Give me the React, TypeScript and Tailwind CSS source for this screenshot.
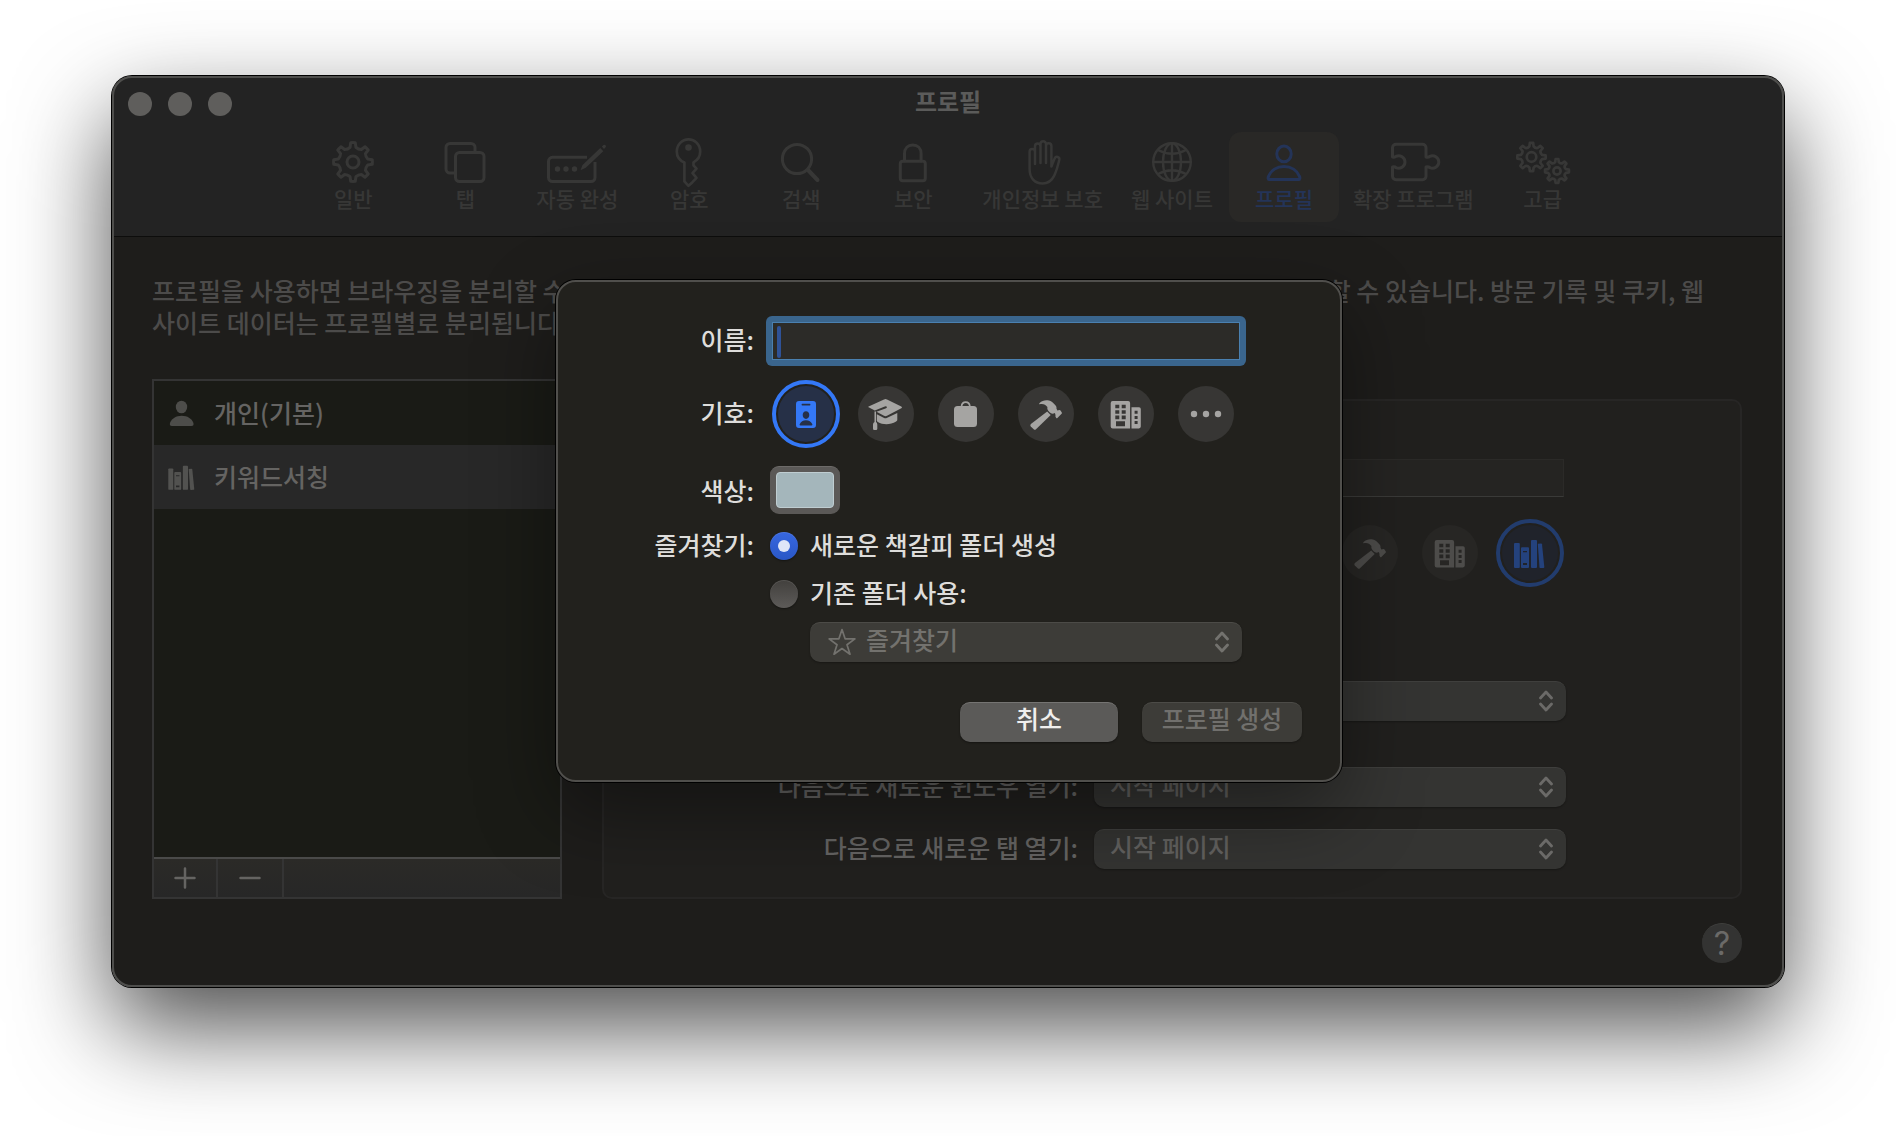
import type { ReactNode } from "react";
import { clsx } from "clsx";

// outline of a cog with rounded joins, first tooth pointing up
function gearPath(cx: number, cy: number, outer: number, root: number, teeth = 8) {
  const step = (Math.PI * 2) / teeth;
  const at = (r: number, a: number) =>
    `${(cx + r * Math.sin(a)).toFixed(2)} ${(cy - r * Math.cos(a)).toFixed(2)}`;
  let d = "";
  for (let i = 0; i < teeth; i++) {
    const a = i * step;
    d += `${i === 0 ? "M" : "L"}${at(root, a - step * 0.25)}`;
    d += `L${at(outer, a - step * 0.15)}`;
    d += `A${outer} ${outer} 0 0 1 ${at(outer, a + step * 0.15)}`;
    d += `L${at(root, a + step * 0.25)}`;
    d += `Q${at(root - 1.4, a + step * 0.5)} ${at(root, a + step * 0.75)}`;
  }
  return d + "Z";
}

function ToolIcon({ children }: { children: ReactNode }) {
  return (
    <svg
      viewBox="0 0 60 48"
      className="h-12 w-[60px] overflow-visible"
      fill="none"
      stroke="currentColor"
      strokeWidth="3"
      strokeLinecap="round"
      strokeLinejoin="round"
      aria-hidden="true"
    >
      {children}
    </svg>
  );
}

const tools: { label: string; icon: ReactNode; active?: boolean }[] = [
  {
    label: "일반",
    icon: (
      <>
        <path d={gearPath(30, 24, 19.4, 15)} />
        <circle cx="30" cy="24" r="6" />
      </>
    ),
  },
  {
    label: "탭",
    icon: (
      <>
        <path d="M40 13V9.5a4 4 0 0 0-4-4H15a4 4 0 0 0-4 4V31a4 4 0 0 0 4 4h4" strokeLinecap="butt" />
        <rect x="20.5" y="14.5" width="28.5" height="29" rx="4" />
      </>
    ),
  },
  {
    label: "자동 완성",
    icon: (
      <>
        <path
          d="M40 19.3H5.5a4 4 0 0 0-4 4V39.5a4 4 0 0 0 4 4H44a4 4 0 0 0 4-4V24"
          strokeLinecap="butt"
        />
        <path
          d="M33.5 32.2l2-5.2L53.3 10l3 3.2-17.5 16.6zM54.8 8.6l1.7-1.6q1-.7 2 .3t.1 2l-1.6 1.6z"
          fill="currentColor"
          stroke="none"
        />
        <g fill="currentColor" stroke="none">
          <circle cx="10.5" cy="31" r="2.7" />
          <circle cx="19" cy="31" r="2.7" />
          <circle cx="27.5" cy="31" r="2.7" />
        </g>
      </>
    ),
  },
  {
    label: "암호",
    icon: (
      <>
        <path
          d="M25.4 24.6C20.6 22.6 17.8 18.8 17.8 13.6 17.8 6.6 23 1.3 29.5 1.3S41.2 6.6 41.2 13.6c0 5-2.6 8.600-6.700 10.800v3l3 3.200-4 4.600 4 4.600-4 4.400-4 3.600-4.100-4.400z"
          strokeWidth="2.7"
        />
        <circle cx="29.5" cy="9.5" r="3.3" fill="currentColor" stroke="none" />
      </>
    ),
  },
  {
    label: "검색",
    icon: (
      <>
        <circle cx="26" cy="21" r="14.6" />
        <path d="M37 32l9.5 10" strokeWidth="4" />
      </>
    ),
  },
  {
    label: "보안",
    icon: (
      <>
        <rect x="17.3" y="23.3" width="25" height="19.5" rx="2.5" />
        <path d="M21.5 23v-7.2c0-5.400 3.500-8.800 8.300-8.800s8.300 3.400 8.300 8.800V23" />
      </>
    ),
  },
  {
    label: "개인정보 보호",
    icon: (
      <path
        d="M22 26V13.800a2.700 2.700 0 0 0-5.400 0V31c0 9 5 14.500 13 14.500 5.500 0 9-2.600 11.500-7.600 2.300-4.700 4-11 5.200-16.200.5-2.700-3.200-4.100-4.600-1.300l-3.300 8.100V8a2.700 2.700 0 0 0-5.400 0v17V6a2.700 2.700 0 0 0-5.500 0v19V8.200a2.700 2.700 0 0 0-5.500 0V24"
        strokeWidth="2.5"
      />
    ),
  },
  {
    label: "웹 사이트",
    icon: (
      <g strokeWidth="2.4">
        <circle cx="30" cy="24" r="18.8" />
        <ellipse cx="30" cy="24" rx="9" ry="18.8" />
        <path d="M30 5.200v37.600M11.200 24h37.600M16 12q14 7.500 28 0M16 36q14-7.500 28 0" />
      </g>
    ),
  },
  {
    label: "프로필",
    active: true,
    icon: (
      <>
        <ellipse cx="30" cy="15.9" rx="7.2" ry="7.8" />
        <path d="M15.500 41.600c-1.500 0-1.600-1.700-1-3.200 2.400-5.800 8.200-9.800 15.500-9.800s13.100 4 15.500 9.800c.6 1.500.5 3.200-1 3.200z" />
      </>
    ),
  },
  {
    label: "확장 프로그램",
    icon: (
      <path d="M9.500 19V9.800a3.500 3.500 0 0 1 3.500-3.500h26.500a3.500 3.500 0 0 1 3.500 3.500V19q2.500.5 3.800-.7a6.300 6.300 0 1 1 0 11.400Q45.500 28.500 43 29v9.200a3.500 3.500 0 0 1-3.500 3.500H13a3.500 3.500 0 0 1-3.500-3.500V29q2.500-.5 3.500.7a6.300 6.300 0 1 0 0-11.400Q12 19.500 9.500 19z" />
    ),
  },
  {
    label: "고급",
    icon: (
      <g strokeWidth="2.7">
        <path d={gearPath(18.5, 19, 14.2, 10.8)} />
        <circle cx="18.5" cy="19" r="4.8" />
        <path d={gearPath(44, 33, 12, 9.2)} />
        <circle cx="44" cy="33" r="3.6" />
      </g>
    ),
  },
];

type SymbolName = "badge" | "cap" | "bag" | "hammer" | "building" | "more" | "books";

function SymbolIcon({ name, className }: { name: SymbolName; className?: string }) {
  return (
    <svg viewBox="0 0 56 56" className={className} fill="currentColor" aria-hidden="true">
      {name === "badge" && (
        <path
          fillRule="evenodd"
          d="M21 15h14a3 3 0 0 1 3 3v21a3 3 0 0 1-3 3H21a3 3 0 0 1-3-3V18a3 3 0 0 1 3-3zM24.200 17.800a.9.9 0 0 0 0 1.700h7.600a.9.9 0 0 0 0-1.700zM28 25.300c-1.900 0-3.300 1.600-3.300 3.700s1.400 3.900 3.300 3.900 3.300-1.800 3.300-3.900-1.400-3.700-3.300-3.700zM22.400 39.600h11.200c.9 0 .9-.8.600-1.500-1-2.400-3.300-3.800-6.200-3.800s-5.200 1.400-6.200 3.800c-.3.7-.3 1.500.6 1.500z"
        />
      )}
      {name === "cap" && (
        <>
          <path d="M18.800 28.300l7.300 3.700q1.300.6 2.600 0l10.600-5v6.600c0 1-.4 1.400-1.200 2-5.800 3.400-13.200 3.400-18.300.4-.7-.5-1-.9-1-1.700z" />
          <path d="M10.600 20.500L26 13.400q1.500-.7 3 0l14.300 7q1.500.9 0 1.800L29 29.800q-1.500.8-3 0l-7.500-4 9.600-3.600q1.300-.7.700-1.500t-2-.2l-10 4-6.200-3.200q-1-.4 0-.8z" />
          <path d="M16.500 25.500h1.500V36q1.300.8 1.300 2.500v4.200q0 1.300-1.300 1.300H16.300Q15 44 15 42.700v-4.200q0-1.700 1.500-2.500z" />
        </>
      )}
      {name === "bag" && (
        <>
          <rect x="16" y="20" width="23" height="21" rx="3.5" />
          <path d="M23.500 20.500c.3-2.800 2-4.300 4.200-4.300s3.900 1.500 4.200 4.300" fill="none" stroke="currentColor" strokeWidth="1.7" />
        </>
      )}
      {name === "hammer" && (
        <>
          <path d="M21.600 18.300c-.7-.2-.5-.9 0-1.400 2.500-2.400 6-3.300 9.400-2.400 2.200.6 3.500 1.900 5.200 3.500 1.900 1.700 2.500 2.600 2.300 4.800l.9 1.700 2-.6q.7-.1 1.100.5l1.300 2.200q.4.700-.2 1.200l-4.200 4.200q-.6.400-1.200-.1-1.200-1-.7-2.800l-.6-2c-2.300 1-3.900.6-5.300-.8-1.800-1.700-2.600-3.200-2.200-5.200-2-2.300-4-3.700-7.800-2.800z" />
          <path d="M29.200 25.600l3.500 3.400L18 43.300q-1.200 1.100-2.300 0l-2.900-2.900q-1.100-1.200.1-2.300z" />
        </>
      )}
      {name === "building" && (
        <path
          fillRule="evenodd"
          d="M14.700 15h15.400a2 2 0 0 1 2 2v25.400H14.700a2 2 0 0 1-2-2V17a2 2 0 0 1 2-2zM17.300 18.700v3.600h4v-3.600zM23.700 18.700v3.600h4v-3.600zM17.300 24.200v3.600h4v-3.600zM23.700 24.200v3.600h4v-3.600zM17.300 29.600v3.600h4v-3.600zM23.700 29.600v3.600h4v-3.600zM18 35.300v5h9v-5zM34 21.200h7a1.800 1.800 0 0 1 1.800 1.800v17.600a1.800 1.800 0 0 1-1.800 1.800H33.500V21.200zM36.600 24.800v3h3v-3zM36.600 29.900v3h3v-3zM36.600 35v3h3v-3z"
        />
      )}
      {name === "more" && (
        <>
          <circle cx="16" cy="28" r="3.2" />
          <circle cx="28" cy="28" r="3.2" />
          <circle cx="40" cy="28" r="3.2" />
        </>
      )}
      {name === "books" && (
        <>
          <rect x="12" y="18" width="5.8" height="25" rx="1" />
          <path
            fillRule="evenodd"
            d="M20 22.300h6a1 1 0 0 1 1 1V42a1 1 0 0 1-1 1h-6a1 1 0 0 1-1-1V23.300a1 1 0 0 1 1-1zM21 26v1.200h4V26zM21 38v2h4v-2z"
          />
          <rect x="29" y="15" width="6" height="28" rx="1" />
          <path d="M35.800 18.800l3.300-.3q.8 0 .9.800l2.300 22.600q.1 1-.9 1.100l-3 .1q-.8 0-.9-.9z" />
        </>
      )}
    </svg>
  );
}

const symbolLabels: Record<SymbolName, string> = {
  badge: "신분증",
  cap: "학사모",
  bag: "가방",
  hammer: "망치",
  building: "건물",
  more: "더 보기",
  books: "책",
};

function SymbolPicker({ names, selected, dim }: { names: SymbolName[]; selected: SymbolName; dim?: boolean }) {
  return (
    <div role="group" aria-label="기호" className="flex gap-3 pl-0.5">
      {names.map((name) => {
        const on = name === selected;
        return (
          <button
            key={name}
            type="button"
            aria-label={symbolLabels[name]}
            aria-pressed={on}
            className={clsx(
              "size-[68px] rounded-full border-4 p-0.5",
              !on && "border-transparent",
              on && (dim ? "border-[#223c6d]" : "border-[#3478f6]"),
            )}
          >
            <span
              className={clsx(
                "block size-14 rounded-full",
                on && (dim ? "bg-[#20232b] text-[#24427d]" : "bg-[#263047] text-[#3478f6]"),
                !on && (dim ? "bg-[#272624] text-[#4d4c4a]" : "bg-[#373634] text-[#a5a4a2]"),
              )}
            >
              <SymbolIcon name={name} className="size-14" />
            </span>
          </button>
        );
      })}
    </div>
  );
}

function Chevrons({ className }: { className?: string }) {
  return (
    <svg
      viewBox="0 0 14 22"
      className={clsx("pointer-events-none absolute top-[9px] right-[13px] h-[22px] w-3.5", className)}
      fill="none"
      stroke="currentColor"
      strokeWidth="2.8"
      strokeLinecap="round"
      strokeLinejoin="round"
      aria-hidden="true"
    >
      <path d="M1.500 8L7 2l5.500 6M1.500 14L7 20l5.500-6" />
    </svg>
  );
}

function PanelSelect({ id, label, value, className }: { id: string; label?: string; value: string; className?: string }) {
  return (
    <div className={clsx("flex items-center justify-end gap-4", className)}>
      {label && (
        <label htmlFor={id} className="pb-1 text-right">
          {label}
        </label>
      )}
      <div className="relative w-[472px]">
        <select
          id={id}
          aria-label={label ? undefined : "즐겨찾기"}
          className="block h-10 w-full appearance-none rounded-[10px] border-t border-[#3f3f3d] bg-[#343432] px-4 pb-2 text-[#62615f] shadow-[0_1px_2px_rgba(0,0,0,.3)]"
        >
          <option>{value}</option>
        </select>
        <Chevrons className="text-[#6b6a68]" />
      </div>
    </div>
  );
}

function Toolbar() {
  return (
    <header className="relative border-b border-[#0d0d0c] bg-[#232323] pb-3.5">
      <div className="absolute top-4 left-4 flex gap-4">
        <button type="button" aria-label="닫기" className="size-6 rounded-full bg-[#5f5e5c]" />
        <button type="button" aria-label="최소화" className="size-6 rounded-full bg-[#5f5e5c]" />
        <button type="button" aria-label="확대" className="size-6 rounded-full bg-[#5f5e5c]" />
      </div>
      <h1 className="pt-[7px] text-center text-2xl leading-9 font-bold text-[#5b5b5a]">프로필</h1>
      <nav className="mt-[13px] flex justify-center gap-0.5">
        {tools.map((tool) => (
          <button
            key={tool.label}
            type="button"
            aria-current={tool.active ? "page" : undefined}
            className={clsx(
              "flex min-w-[110px] flex-col items-center rounded-xl px-3 pt-1.5 pb-3 text-[21px] leading-6 font-medium",
              tool.active ? "bg-[#292826] text-[#243458]" : "text-[#373736]",
            )}
          >
            <ToolIcon>{tool.icon}</ToolIcon>
            {tool.label}
          </button>
        ))}
      </nav>
    </header>
  );
}

function ProfileList() {
  return (
    <div className="mt-[41px] flex w-[410px] shrink-0 flex-col border-2 border-[#343434] bg-[#1a1b16] text-[#656462]">
      <ul>
        <li className="flex h-16 items-center gap-2 pl-1">
          <svg viewBox="0 0 48 48" className="size-12 text-[#4d4d4a]" fill="currentColor" aria-hidden="true">
            <ellipse cx="23.5" cy="18" rx="5.7" ry="6.3" />
            <path d="M14 37c-1.800 0-2.700-1.300-1.900-3.300C13.800 29.600 18 26.800 23.700 26.800s9.900 2.800 11.600 6.900c.8 2-.1 3.300-1.900 3.300z" />
          </svg>
          <span className="pb-0.5">개인(기본)</span>
        </li>
        <li className="flex h-16 items-center gap-2 bg-[#282828] pl-1">
          <SymbolIcon name="books" className="size-12 text-[#525250]" />
          <span className="pb-0.5">키워드서칭</span>
        </li>
      </ul>
      <div className="mt-auto flex h-10 border-t-2 border-[#4a4a49] bg-linear-to-b from-[#2b2a27] to-[#272727]">
        <button type="button" aria-label="프로필 추가" className="flex w-16 items-center justify-center border-r-2 border-[#343434]">
          <svg viewBox="0 0 22 22" className="size-[22px]" stroke="currentColor" strokeWidth="2.5" strokeLinecap="round">
            <path d="M11 1.500v19M1.500 11h19" />
          </svg>
        </button>
        <button type="button" aria-label="프로필 제거" className="flex w-[66px] items-center justify-center border-r-2 border-[#343434]">
          <svg viewBox="0 0 22 22" className="size-[22px]" stroke="currentColor" strokeWidth="2.5" strokeLinecap="round">
            <path d="M1.500 11h19" />
          </svg>
        </button>
      </div>
    </div>
  );
}

function ProfileDetail() {
  return (
    <section className="mt-[61px] flex-1 rounded-[10px] border-2 border-[#272625] bg-[#21201e] pt-[58px] pr-[174px] pb-7 text-[#656463]">
      <div className="flex justify-end">
        <div className="w-[472px]">
          <input
            type="text"
            aria-label="이름"
            className="block h-[38px] w-[470px] border border-[#2b2a28] border-b-[#3a3a38] bg-[#252422] px-2"
          />
        </div>
      </div>
      <div className="mt-[22px] flex justify-end">
        <div className="w-[472px]">
          <SymbolPicker dim selected="books" names={["badge", "cap", "bag", "hammer", "building", "books"]} />
        </div>
      </div>
      <PanelSelect id="detail-favorites" value="" className="mt-[94px]" />
      <PanelSelect id="detail-window" label="다음으로 새로운 윈도우 열기:" value="시작 페이지" className="mt-[46px]" />
      <PanelSelect id="detail-tab" label="다음으로 새로운 탭 열기:" value="시작 페이지" className="mt-[22px]" />
    </section>
  );
}

const rowLabel = "w-[196px] shrink-0 text-right";
const radio =
  "size-7 appearance-none rounded-full bg-linear-to-b from-[#42403d] to-[#5d5b59] shadow-[inset_0_1px_0_rgba(255,255,255,.1),0_1px_2px_rgba(0,0,0,.4)] checked:from-[#3767e0] checked:to-[#2a57c6]";

function NewProfileDialog() {
  return (
    <div className="absolute inset-x-0 top-[204px] flex justify-center pl-0.5">
      <form
        role="dialog"
        aria-label="프로필 생성"
        className="w-[786px] rounded-[20px] border-2 border-[#504f4c] bg-[#22211d] pt-[34px] pb-[38px] text-[#dedddb] shadow-[0_0_0_1px_#000,0_30px_80px_rgba(0,0,0,.4)]"
      >
        <div className="flex items-center gap-3">
          <label htmlFor="new-name" className={clsx(rowLabel, "pb-1")}>
            이름:
          </label>
          <div className="relative rounded-md bg-[#3a658d] p-1.5">
            <input
              id="new-name"
              type="text"
              className="block h-[38px] w-[468px] border border-[#4a80b0] bg-[#2c2b28] px-2 outline-none"
            />
            <span className="absolute top-2.5 left-[11px] h-8 w-1 rounded-sm bg-[#2f5297]" />
          </div>
        </div>

        <div className="mt-3.5 flex items-center gap-4">
          <span className={clsx(rowLabel, "pb-1")}>기호:</span>
          <SymbolPicker selected="badge" names={["badge", "cap", "bag", "hammer", "building", "more"]} />
        </div>

        <div className="mt-[18px] flex items-center gap-4">
          <label htmlFor="new-color" className={rowLabel}>
            색상:
          </label>
          <input
            id="new-color"
            type="color"
            defaultValue="#a4b6bb"
            className="h-12 w-[70px] appearance-none rounded-[9px] border-t border-[#6d6b69] bg-[#5b5957] px-1.5 pt-[5px] pb-1.5 [&::-webkit-color-swatch]:rounded [&::-webkit-color-swatch]:border [&::-webkit-color-swatch]:border-[#bfcdd1] [&::-webkit-color-swatch-wrapper]:p-0"
          />
        </div>

        <fieldset className="mt-[18px] flex gap-4">
          <legend className="sr-only">즐겨찾기</legend>
          <span className={clsx(rowLabel, "leading-6")} aria-hidden="true">
            즐겨찾기:
          </span>
          <div>
            <label className="flex h-7 items-center gap-3">
              <span className="relative flex size-7">
                <input type="radio" name="folder" defaultChecked className={radio} />
                <span className="absolute top-2 left-2 size-3 rounded-full bg-[#dfe6f8]" />
              </span>
              <span className="pb-1">새로운 책갈피 폴더 생성</span>
            </label>
            <label className="mt-5 flex h-7 items-center gap-3">
              <input type="radio" name="folder" className={radio} />
              <span className="pb-1">기존 폴더 사용:</span>
            </label>
            <div className="relative mt-3.5 ml-10 text-[#73726e]">
              <select
                disabled
                aria-label="기존 폴더 사용"
                className="block h-10 w-[432px] appearance-none rounded-[10px] border-t border-[#4c4b47] bg-[#3d3c38] pb-2 pl-14 shadow-[0_1px_2px_rgba(0,0,0,.3)]"
              >
                <option>즐겨찾기</option>
              </select>
              <svg
                viewBox="0 0 28 28"
                className="pointer-events-none absolute top-1.5 left-[18px] size-7"
                fill="none"
                stroke="currentColor"
                strokeWidth="1.7"
                strokeLinejoin="round"
                aria-hidden="true"
              >
                <path d="M14 1.500l3.100 9.300 9.800.1-7.900 5.900 3 9.400-8-5.700-8 5.700 3-9.400L1.100 10.900l9.800-.1z" />
              </svg>
              <Chevrons />
            </div>
          </div>
        </fieldset>

        <div className="mt-10 flex justify-end gap-6 pr-[38px]">
          <button
            type="button"
            className="h-10 w-[158px] rounded-[10px] border-t border-[#757472] bg-[#5b5a58] pb-2 leading-none text-[#f0efee] shadow-[0_1px_2px_rgba(0,0,0,.4)]"
          >
            취소
          </button>
          <button
            type="submit"
            disabled
            className="h-10 w-40 rounded-[10px] border-t border-[#4c4b47] bg-[#3d3c38] pb-2 leading-none text-[#71706d] shadow-[0_1px_2px_rgba(0,0,0,.3)]"
          >
            프로필 생성
          </button>
        </div>
      </form>
    </div>
  );
}

export default function App() {
  return (
    <div className="min-h-screen bg-white px-28 pt-[76px] pb-[148px] font-['Noto_Sans_CJK_KR',sans-serif] text-[25px] leading-8 font-medium">
      <div className="relative rounded-[20px] shadow-[0_0_0_1px_#000,0_40px_96px_rgba(0,0,0,.7)]">
        <div className="overflow-hidden rounded-[20px] bg-[#1e1d1b]">
          <Toolbar />
          <main className="pt-[37px] pr-[42px] pb-6 pl-10">
            <div className="text-[#4c4b4a]">
              <p className="flex justify-between pr-[38px] whitespace-nowrap">
                <span>프로필을 사용하면 브라우징을 분리할 수 있고</span>
                <span>할 수 있습니다. 방문 기록 및 쿠키, 웹</span>
              </p>
              <p>사이트 데이터는 프로필별로 분리됩니다.</p>
            </div>
            <div className="flex gap-10">
              <ProfileList />
              <ProfileDetail />
            </div>
            <div className="mt-6 flex justify-end">
              <button
                type="button"
                aria-label="도움말"
                className="size-10 rounded-full border-t border-[#3f3f3d] bg-[#333332] font-[Inter,sans-serif] text-[32px] leading-none font-normal text-[#6b6a68]"
              >
                ?
              </button>
            </div>
          </main>
        </div>
        {/* light rim drawn over the window edge */}
        <div className="pointer-events-none absolute inset-0 rounded-[20px] border-2 border-[#4e4e4c]" />
        <NewProfileDialog />
      </div>
    </div>
  );
}
